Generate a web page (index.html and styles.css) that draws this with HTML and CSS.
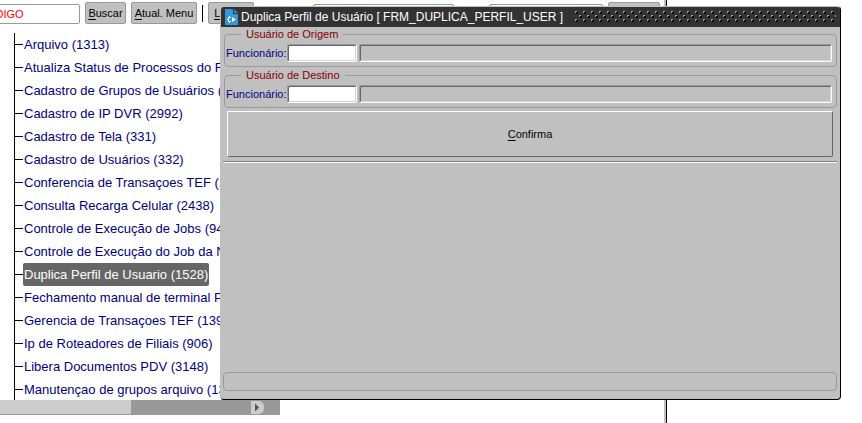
FILE: index.html
```html
<!DOCTYPE html>
<html lang="pt-BR">
<head>
<meta charset="utf-8">
<title>Duplica Perfil de Usuário</title>
<link rel="stylesheet" href="styles.css">
</head>
<body>
<main class="panel">
  <form class="toolbar">
    <input class="box code" type="text" value="CÓDIGO" aria-label="Código">
    <button class="tool" type="button"><u>B</u>uscar</button>
    <button class="tool wide" type="button"><u>A</u>tual. Menu</button>
    <span class="divider"></span>
    <button class="tool clear" type="button"><u>L</u>impar</button>
    <input class="box medium" type="text" aria-label="Usuário">
    <input class="box small" type="text" aria-label="Filial">
    <button class="tool exit" type="button" aria-label="Sair"></button>
  </form>
  <nav class="tree">
    <ul>
      <li><a href="#">Arquivo (1313)</a></li>
      <li><a href="#">Atualiza Status de Processos do Robo</a></li>
      <li><a href="#">Cadastro de Grupos de Usuários (330)</a></li>
      <li><a href="#">Cadastro de IP DVR (2992)</a></li>
      <li><a href="#">Cadastro de Tela (331)</a></li>
      <li><a href="#">Cadastro de Usuários (332)</a></li>
      <li><a href="#">Conferencia de Transaçoes TEF (1390)</a></li>
      <li><a href="#">Consulta Recarga Celular (2438)</a></li>
      <li><a href="#">Controle de Execução de Jobs (940)</a></li>
      <li><a href="#">Controle de Execução do Job da Nota</a></li>
      <li><a href="#" class="selected">Duplica Perfil de Usuario (1528)</a></li>
      <li><a href="#">Fechamento manual de terminal PDV</a></li>
      <li><a href="#">Gerencia de Transaçoes TEF (1391)</a></li>
      <li><a href="#">Ip de Roteadores de Filiais (906)</a></li>
      <li><a href="#">Libera Documentos PDV (3148)</a></li>
      <li><a href="#">Manutençao de grupos arquivo (1314)</a></li>
    </ul>
    <div class="scrollbar">
      <span class="thumb"></span>
      <button class="arrow" type="button" aria-label="Rolar para a direita">
        <svg viewBox="0 0 13 13" width="13" height="13"><path fill="#ccc" d="M0 0h9l3 2 1 3v3l-1 3-3 2H0z"/><path fill="#555" d="M4 2.500v8l4-4z"/></svg>
      </button>
    </div>
  </nav>
</main>

<section class="window">
  <header class="titlebar">
    <svg class="logo" viewBox="0 0 13 16" width="13" height="16"><path fill="#3498db" d="M0 0h8v5h5v11H0z"/><path fill="#2f8ac8" d="M9 0l4 4H9z"/><path fill="none" stroke="#fff" d="M6 8.500H3.500v4H6M4.500 7v1.500M4.500 12.500V14M2 10.500h2"/><path fill="#fff" d="M7 8v5l4-2.500z"/></svg>
    <h1>Duplica Perfil de Usuário [ FRM_DUPLICA_PERFIL_USER ]</h1>
    <svg class="grip" height="12" aria-hidden="true">
      <defs>
        <pattern id="dots" width="8" height="8" patternUnits="userSpaceOnUse">
          <path fill="#000" d="M1 1h2v2H1zM5 5h2v2H5z"/>
          <path fill="#999" d="M0 0h2v1H1v1H0zM4 4h2v1H5v1H4z"/>
        </pattern>
      </defs>
      <rect width="100%" height="12" fill="url(#dots)"/>
    </svg>
  </header>
  <form class="content">
    <fieldset>
      <legend>Usuário de Origem</legend>
      <label for="origem">Funcionário:</label>
      <input id="origem" class="sunken number" type="text">
      <input class="sunken name" type="text" readonly aria-label="Nome de origem">
    </fieldset>
    <fieldset>
      <legend>Usuário de Destino</legend>
      <label for="destino">Funcionário:</label>
      <input id="destino" class="sunken number" type="text">
      <input class="sunken name" type="text" readonly aria-label="Nome de destino">
    </fieldset>
    <button class="confirm" type="button"><u>C</u>onfirma</button>
  </form>
  <hr>
  <footer class="status"></footer>
</section>
</body>
</html>
```
FILE: styles.css
```css
* {
  box-sizing: border-box;
}

body {
  margin: 0;
  height: 100vh;
  overflow: hidden;
  background: #fff;
  font: 11px "Liberation Sans", Arial, sans-serif;
  color: #000;
}

u {
  text-underline-offset: 2px;
}

.panel {
  width: 667px;
  height: 100%;
  overflow: hidden;
  border-right: 1px solid #000;
  box-shadow: inset -2px 0 #c0c0c0;
}

.toolbar {
  display: flex;
  gap: 5px;
  align-items: flex-start;
  height: 33px;
  padding-top: 2px;
  margin-left: -29px;
}

.box {
  flex: none;
  height: 20px;
  margin: 2px 0 0;
  padding: 0 4px;
  border: 1px solid #999;
  border-radius: 2px;
  background: #fff;
  font: inherit;
}

.code {
  width: 109px;
  padding-left: 5px;
  text-indent: 2px;
  color: #f00;
}

.medium {
  width: 141px;
  margin-left: 54px;
}

.small {
  width: 114px;
  margin-left: 30px;
}

.tool {
  flex: none;
  width: 41px;
  height: 22px;
  padding: 0;
  border: 1px solid #999;
  border-radius: 2px;
  background: #c0c0c0;
  font: inherit;
  color: #000;
  white-space: nowrap;
}

.wide {
  width: 66px;
}

.clear {
  width: 46px;
}

.exit {
  width: 52px;
}

.divider {
  width: 1px;
  height: 17px;
  margin-top: 3px;
  background: #000;
}

.tree ul {
  margin: 0 0 -1px 14px;
  padding: 0;
  border-left: 1px solid #000;
  list-style: none;
}

.tree li {
  display: flex;
  align-items: center;
  height: 23px;
  font-size: 13px;
  white-space: nowrap;
}

.tree li::before {
  content: "";
  width: 8px;
  height: 1px;
  background: #000;
}

.tree a {
  padding: 1px 1px 0;
  border-radius: 2px;
  line-height: 22px;
  color: #000080;
  text-decoration: none;
}

.tree .selected {
  background: #666;
  color: #fff;
}

.scrollbar {
  position: relative;
  display: flex;
  align-items: center;
  width: 280px;
  height: 15px;
  border-bottom: 1px solid #999;
  background: #999;
}

.thumb {
  width: 131px;
  height: 100%;
  background: #ccc;
}

.arrow {
  margin: 0 0 0 auto;
  padding: 0 16px 0 0;
  border: 0;
  background: none;
  line-height: 0;
}

.window {
  position: absolute;
  top: 6px;
  right: 21px;
  bottom: 23px;
  left: 220px;
  display: flex;
  flex-direction: column;
  overflow: hidden;
  border: 1px solid #000;
  border-top-color: #c0c0c0;
  border-left-color: #c0c0c0;
  border-radius: 4px;
  background: #c0c0c0;
}

.titlebar {
  display: flex;
  flex: none;
  align-items: center;
  height: 20px;
  padding: 0 4px;
  background: #333;
  color: #fff;
}

.logo {
  flex: none;
  margin-right: 3px;
}

.titlebar h1 {
  margin: 0;
  font-size: 12px;
  font-weight: normal;
  white-space: nowrap;
}

.grip {
  flex: 1;
  min-width: 0;
  margin-left: 12px;
}

.content {
  padding: 0 3px 4px;
}

fieldset {
  display: flex;
  align-items: center;
  gap: 2px;
  min-width: 0;
  height: 40px;
  margin: 0 0 1px;
  padding: 0 4px 2px 1px;
  border: 1px solid #999;
  border-radius: 4px;
}

legend {
  margin-left: 15px;
  padding: 0 5px;
  line-height: 14px;
  color: #800000;
}

label {
  width: 59px;
  color: #000080;
  white-space: nowrap;
}

.sunken {
  height: 18px;
  min-width: 0;
  margin: 0;
  padding: 0 3px;
  border: 1px solid;
  border-color: #999 #fff #fff #999;
  border-radius: 2px;
  box-shadow: inset 1px 1px #666, inset -1px -1px #d4d4d4;
  background: #fff;
  font: inherit;
}

.number {
  width: 70px;
}

.name {
  flex: 1;
  background: #c0c0c0;
}

.confirm {
  display: block;
  width: calc(100% - 7px);
  height: 46px;
  margin: 3px 4px 0 3px;
  border: 1px solid;
  border-color: #fff #666 #666 #fff;
  border-radius: 2px;
  background: #c0c0c0;
  font: inherit;
}

hr {
  flex: none;
  width: auto;
  height: 2px;
  margin: 0 3px 0 2px;
  border: 0;
  border-top: 1px solid #808080;
  border-bottom: 1px solid #fff;
}

.status {
  height: 19px;
  margin: auto 3px 8px 2px;
  border: 1px solid #999;
  border-radius: 4px;
}
```
